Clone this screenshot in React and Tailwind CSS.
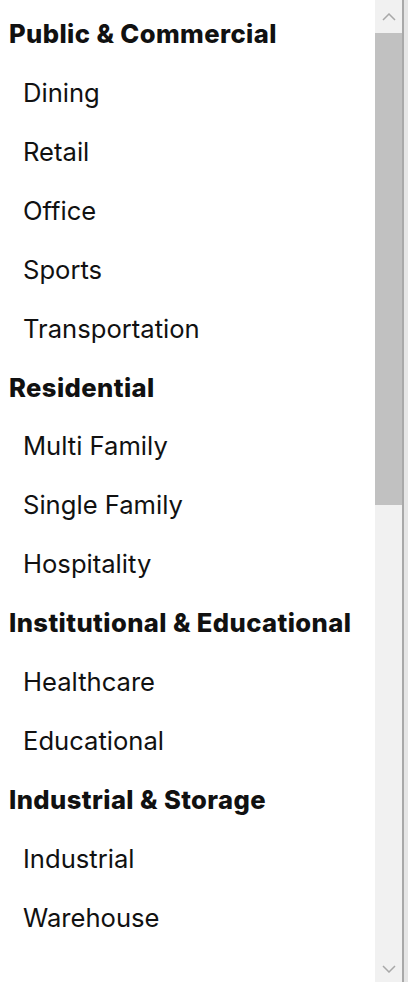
import React from 'react';

const groups = [
    { label: 'Public & Commercial', items: ['Dining', 'Retail', 'Office', 'Sports', 'Transportation'] },
    { label: 'Residential', items: ['Multi Family', 'Single Family', 'Hospitality'] },
    { label: 'Institutional & Educational', items: ['Healthcare', 'Educational'] },
    { label: 'Industrial & Storage', items: ['Industrial', 'Warehouse'] },
];

const Chevron = ({ up }) => (
    <svg width="14" height="8" viewBox="0 0 14 8" fill="none">
        <path
            d={up ? 'M1 7 L7 1 L13 7' : 'M1 1 L7 7 L13 1'}
            stroke="#a8a8a8"
            strokeWidth="1.5"
        />
    </svg>
);

const App = () => {
    return (
        <div className="flex h-[982px] w-[408px] bg-white overflow-hidden" style={{ fontFamily: 'Inter, "Noto Sans", sans-serif' }}>
            {/* Option list */}
            <div className="flex-1 pt-[5px] text-[25.6px] text-[#111]">
                {groups.map((group) => (
                    <div key={group.label}>
                        <div className="h-[58.9px] flex items-center pl-[9px] font-extrabold tracking-[0.4px] whitespace-nowrap">{group.label}</div>
                        {group.items.map((item) => (
                            <div key={item} className="h-[58.9px] flex items-center pl-[23px]">
                                {item}
                            </div>
                        ))}
                    </div>
                ))}
            </div>

            {/* Scrollbar */}
            <div className="flex w-[33px] shrink-0">
                <div className="flex flex-col w-[27px] bg-[#f1f1f1]">
                    <div className="h-[33px] flex items-center justify-center">
                        <Chevron up />
                    </div>
                    <div className="h-[472px] bg-[#c1c1c1]" />
                    <div className="flex-1" />
                    <div className="h-[27px] flex items-center justify-center">
                        <Chevron />
                    </div>
                </div>
                <div className="w-[2px] bg-[#a9a9a9]" />
                <div className="flex-1 bg-[#e6e6e6]" />
            </div>
        </div>
    );
};

export default App;
